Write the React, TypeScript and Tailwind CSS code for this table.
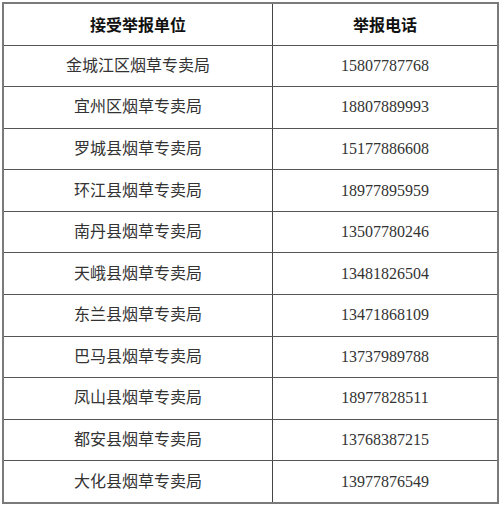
const rows = [
  ["金城江区烟草专卖局", "15807787768"],
  ["宜州区烟草专卖局", "18807889993"],
  ["罗城县烟草专卖局", "15177886608"],
  ["环江县烟草专卖局", "18977895959"],
  ["南丹县烟草专卖局", "13507780246"],
  ["天峨县烟草专卖局", "13481826504"],
  ["东兰县烟草专卖局", "13471868109"],
  ["巴马县烟草专卖局", "13737989788"],
  ["凤山县烟草专卖局", "18977828511"],
  ["都安县烟草专卖局", "13768387215"],
  ["大化县烟草专卖局", "13977876549"],
];

const App = () => {
  return (
    <div className="h-[506px] w-[500px] bg-white pl-[2px] pt-[2px]">
      <div className="flex h-[502px] w-[497px] flex-col border-2 border-[#7a7a7a] font-['Liberation_Serif','Noto_Sans_CJK_SC',serif] text-[16px] text-[#333]">
        <div className="grid flex-1 grid-cols-[269px_1fr] border-b border-[#555]">
          <div className="flex items-center justify-center border-r border-[#444] font-['Noto_Sans_CJK_SC',sans-serif] font-bold text-[#111]">
            接受举报单位
          </div>
          <div className="flex items-center justify-center font-['Noto_Sans_CJK_SC',sans-serif] font-bold text-[#111]">
            举报电话
          </div>
        </div>
        {rows.map((row, i) => (
          <div
            key={i}
            className={
              i < rows.length - 1
                ? "grid flex-1 grid-cols-[269px_1fr] border-b border-[#555]"
                : "grid flex-1 grid-cols-[269px_1fr]"
            }
          >
            <div className="flex items-center justify-center border-r border-[#444]">
              {row[0]}
            </div>
            <div className="flex items-center justify-center">{row[1]}</div>
          </div>
        ))}
      </div>
    </div>
  );
};

export default App;
